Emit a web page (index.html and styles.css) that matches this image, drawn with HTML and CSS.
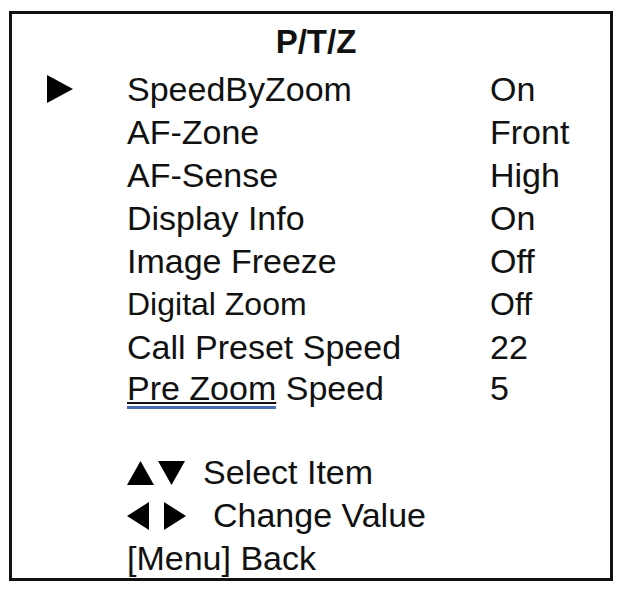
FILE: index.html
```html
<!DOCTYPE html>
<html>
<head>
<meta charset="utf-8">
<link rel="stylesheet" href="styles.css">
</head>
<body>
<div class="menu">
  <div class="title">P/T/Z</div>
  <div class="rows">
    <div class="row r1"><span class="mark"><svg width="26" height="28" viewBox="0 0 26 28"><polygon points="0,0 26,14 0,28" fill="#000"/></svg></span><span class="label">SpeedByZoom</span><span class="val">On</span></div>
    <div class="row"><span class="mark"></span><span class="label">AF-Zone</span><span class="val">Front</span></div>
    <div class="row"><span class="mark"></span><span class="label">AF-Sense</span><span class="val">High</span></div>
    <div class="row"><span class="mark"></span><span class="label">Display Info</span><span class="val">On</span></div>
    <div class="row"><span class="mark"></span><span class="label">Image Freeze</span><span class="val">Off</span></div>
    <div class="row small"><span class="mark"></span><span class="label">Digital Zoom</span><span class="val">Off</span></div>
    <div class="row r7"><span class="mark"></span><span class="label">Call Preset Speed</span><span class="val">22</span></div>
    <div class="row r8"><span class="mark"></span><span class="label"><span class="spell">Pre Zoom</span> Speed</span><span class="val">5</span></div>
  </div>
  <div class="help">
    <div class="hline"><svg class="tri" width="62" height="24" viewBox="0 0 62 24"><polygon points="0,24 13.5,0 27,24" fill="#000"/><polygon points="31,0 58,0 44.5,24" fill="#000"/></svg><span>Select Item</span></div>
    <div class="hline"><svg class="tri" width="62" height="28" viewBox="0 0 62 28"><polygon points="0,14 22,0 22,28" fill="#000"/><polygon points="37,0 59,14 37,28" fill="#000"/></svg><span class="cv">Change Value</span></div>
    <div class="hline"><span>[Menu] Back</span></div>
  </div>
</div>
</body>
</html>
```
FILE: styles.css
```css
html, body {
  margin: 0;
  padding: 0;
  background: #fff;
}
body {
  font-family: "Liberation Sans", Arial, sans-serif;
  color: #111;
}
.menu {
  box-sizing: border-box;
  width: 604px;
  height: 570px;
  margin: 11px 0 0 9px;
  border: 3px solid #111;
  padding: 6px 0 0 35px;
  display: flex;
  flex-direction: column;
}
.title {
  font-weight: bold;
  font-size: 33px;
  line-height: 43px;
  height: 43px;
  text-align: center;
  padding-right: 25px;
}
.rows {
  margin-top: 5px;
  display: flex;
  flex-direction: column;
}
.row {
  display: grid;
  grid-template-columns: 80px 363px auto;
  font-size: 34px;
  line-height: 43px;
  height: 43px;
  align-items: center;
}
.row.small {
  font-size: 32px;
}
.r7 { height: 41px; line-height: 41px; }
.r8 { height: 39px; line-height: 39px; }
.mark {
  display: flex;
  align-items: center;
  height: 43px;
}
.mark svg { display: block; margin-top: -2px; }
.spell {
  text-decoration: underline;
  text-decoration-thickness: 2px;
  text-underline-offset: 2px;
  border-bottom: 3px solid #4a6db3;
  line-height: 1;
  display: inline-block;
  height: 38px;
  box-sizing: border-box;
}
.help {
  margin-top: 45px;
  padding-left: 80px;
  display: flex;
  flex-direction: column;
  font-size: 34px;
}
.hline {
  display: flex;
  align-items: center;
  height: 43px;
  line-height: 43px;
}
.hline .tri {
  display: block;
  margin-right: 14px;
}
.hline .cv { margin-left: 10px; }
```
